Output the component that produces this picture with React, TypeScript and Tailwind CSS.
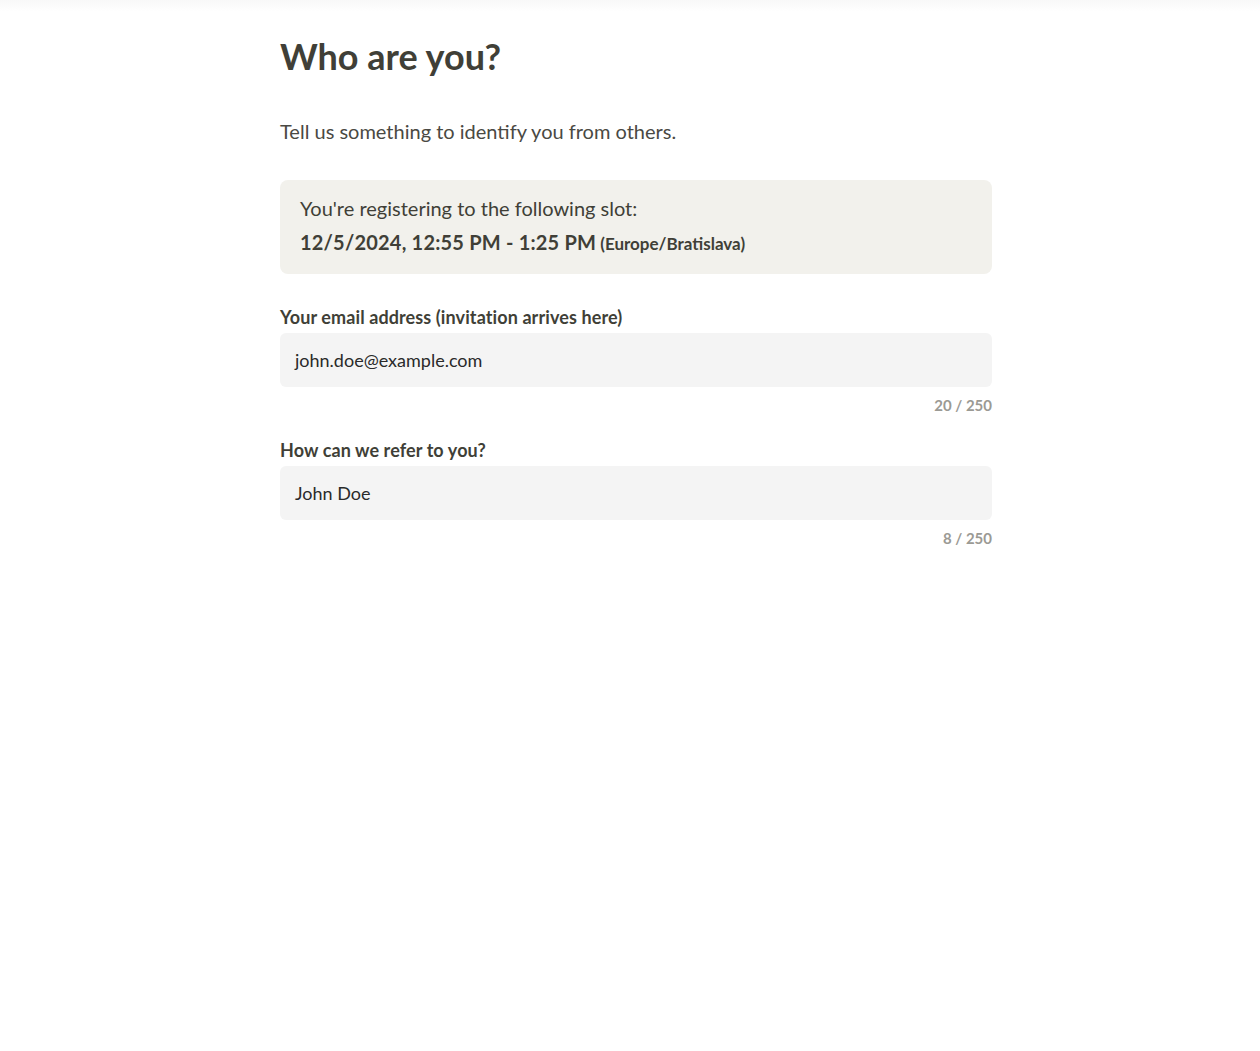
import React from "react";

function Field({ label, value, max }: { label: string; value: string; max: number }) {
  return (
    <div className="flex flex-col">
      <label className="text-[18px] font-bold leading-6 tracking-[0.1px] text-[#403f37]">{label}</label>
      <div className="mt-1 flex h-[54px] items-center rounded-md bg-[#f4f4f4] px-[15px] text-lg text-[#2a2a2a]">
        {value}
      </div>
      <div className="mt-[8px] text-right text-[15px] font-bold leading-5 text-[#9b9a94]">
        {value.length} / {max}
      </div>
    </div>
  );
}

export default function App() {
  return (
    <div className="min-h-[1051px] bg-white" style={{ fontFamily: "Lato, 'Open Sans', sans-serif" }}>
      <div className="h-3 bg-gradient-to-b from-[#f8f8f8] to-white" />
      <div className="ml-[280px] w-[712px] pt-[22px]">
        <h1 className="text-4xl font-bold leading-[44px] text-[#403f37]">Who are you?</h1>
        <p className="mt-[39px] text-xl leading-7 text-[#4a4943]">Tell us something to identify you from others.</p>

        <div className="mt-[35px] rounded-lg bg-[#f2f1ec] px-5 pt-[14px] pb-[16px] text-[#403f37]">
          <div className="text-xl leading-7">You're registering to the following slot:</div>
          <div className="mt-[6px] leading-7">
            <span className="text-xl font-bold tracking-[0.2px]">12/5/2024, 12:55 PM - 1:25 PM</span>{" "}
            <span className="text-[17px] font-bold">(Europe/Bratislava)</span>
          </div>
        </div>

        <div className="mt-[31px] flex flex-col gap-[23px]">
          <Field label="Your email address (invitation arrives here)" value="john.doe@example.com" max={250} />
          <Field label="How can we refer to you?" value="John Doe" max={250} />
        </div>
      </div>
    </div>
  );
}
